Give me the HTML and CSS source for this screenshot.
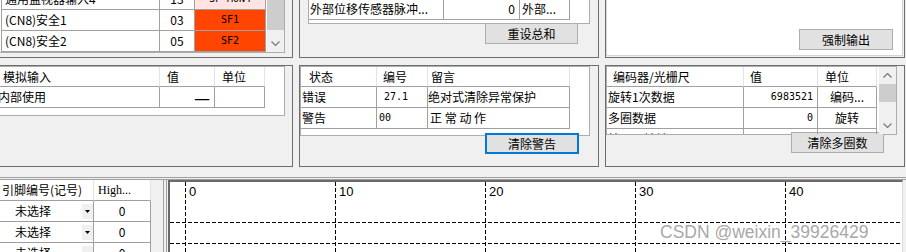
FILE: index.html
```html
<!DOCTYPE html>
<html>
	<head>
		<meta charset="UTF-8">
		<title>监视器</title>
		<link rel="stylesheet" href="styles.css">
	</head>
	<body>
		<div class="screen">
			<!--上排三个面板-->
			<div class="row row-top">
				<div class="panel panel-cut">
					<div class="list list-io">
						<div class="grid grid-io">
							<div class="cell">通用监视器输入4</div>
							<div class="cell c">13</div>
							<div class="cell c mono pink">SF-MON4</div>
							<div class="cell">(CN8)安全1</div>
							<div class="cell c">03</div>
							<div class="cell c mono orange">SF1</div>
							<div class="cell">(CN8)安全2</div>
							<div class="cell c">05</div>
							<div class="cell c mono orange">SF2</div>
						</div>
						<div class="vscroll">
							<div class="thumb thumb-io"></div>
							<div class="track"></div>
							<div class="sbtn">
								<svg width="9" height="5" viewBox="0 0 9 5"><polyline points="0.5,0.5 4.5,4.5 8.5,0.5" fill="none" stroke="#7a7a7a" stroke-width="1.2"/></svg>
							</div>
						</div>
					</div>
				</div>

				<div class="panel">
					<div class="list list-ext">
						<div class="grid grid-ext">
							<div class="cell">外部位移传感器脉冲...</div>
							<div class="cell r">0</div>
							<div class="cell">外部...</div>
						</div>
					</div>
					<button class="btn btn-sum">重设总和</button>
				</div>

				<div class="panel">
					<div class="out-area">
						<button class="btn btn-out">强制输出</button>
					</div>
				</div>
			</div>

			<!--中排三个面板-->
			<div class="row row-mid">
				<div class="panel panel-cut">
					<div class="list list-ai">
						<div class="grid grid-ai">
							<div class="cell head">模拟输入</div>
							<div class="cell head">值</div>
							<div class="cell head">单位</div>
							<div class="cell body-ai">内部使用</div>
							<div class="cell r"><span class="dash">—</span></div>
							<div class="cell"></div>
						</div>
					</div>
				</div>

				<div class="panel">
					<div class="list list-alarm">
						<div class="grid grid-alarm">
							<div class="cell head h-state">状态</div>
							<div class="cell head h-no">编号</div>
							<div class="cell head h-msg">留言</div>
							<div class="cell">错误</div>
							<div class="cell mono no-err">27.1</div>
							<div class="cell msg-err">绝对式清除异常保护</div>
							<div class="cell">警告</div>
							<div class="cell mono no-warn">00</div>
							<div class="cell msg-warn">正 常 动 作</div>
						</div>
					</div>
					<button class="btn btn-focus btn-warn">清除警告</button>
				</div>

				<div class="panel">
					<div class="list list-enc">
						<div class="grid grid-enc">
							<div class="cell head">编码器/光栅尺</div>
							<div class="cell head">值</div>
							<div class="cell head">单位</div>
							<div class="cell">旋转1次数据</div>
							<div class="cell r mono">6983521</div>
							<div class="cell c">编码...</div>
							<div class="cell">多圈数据</div>
							<div class="cell r mono">0</div>
							<div class="cell c">旋转</div>
							<div class="cell">编码器地址</div>
							<div class="cell"></div>
							<div class="cell"></div>
						</div>
						<div class="vscroll">
							<div class="sbtn">
								<svg width="9" height="5" viewBox="0 0 9 5"><polyline points="0.5,4.5 4.5,0.5 8.5,4.5" fill="none" stroke="#7a7a7a" stroke-width="1.2"/></svg>
							</div>
							<div class="thumb thumb-enc"></div>
							<div class="track"></div>
							<div class="sbtn">
								<svg width="9" height="5" viewBox="0 0 9 5"><polyline points="0.5,0.5 4.5,4.5 8.5,0.5" fill="none" stroke="#7a7a7a" stroke-width="1.2"/></svg>
							</div>
						</div>
					</div>
					<button class="btn btn-multi">清除多圈数</button>
				</div>
			</div>

			<!--下方: 引脚表 + 波形-->
			<div class="bottom">
				<div class="bottom-inner">
					<div class="grid pins">
						<div class="cell head h-pin">引脚编号(记号)</div>
						<div class="cell head h-high">High...</div>
						<div class="cell pick"><span class="pick-text">未选择</span><span class="dd"><svg width="5" height="3" viewBox="0 0 5 3"><polygon points="0,0 5,0 2.5,3" fill="#000"/></svg></span></div>
						<div class="cell c">0</div>
						<div class="cell pick"><span class="pick-text">未选择</span><span class="dd"><svg width="5" height="3" viewBox="0 0 5 3"><polygon points="0,0 5,0 2.5,3" fill="#000"/></svg></span></div>
						<div class="cell c">0</div>
						<div class="cell pick"><span class="pick-text">未选择</span><span class="dd"><svg width="5" height="3" viewBox="0 0 5 3"><polygon points="0,0 5,0 2.5,3" fill="#000"/></svg></span></div>
						<div class="cell c">0</div>
					</div>
					<div class="graph-frame">
						<div class="graph-inner">
							<div class="graph">
								<svg class="plot" width="732" height="70" viewBox="0 0 732 70">
									<g stroke="#000" stroke-width="1" stroke-dasharray="4 2" fill="none">
										<line x1="15.5" y1="0" x2="15.5" y2="70"/>
										<line x1="165.5" y1="0" x2="165.5" y2="70"/>
										<line x1="315.5" y1="0" x2="315.5" y2="70"/>
										<line x1="465.5" y1="0" x2="465.5" y2="70"/>
										<line x1="615.5" y1="0" x2="615.5" y2="70"/>
										<line x1="0" y1="40.5" x2="732" y2="40.5"/>
										<line x1="0" y1="61.5" x2="732" y2="61.5"/>
									</g>
									<g class="plot-label">
										<text x="19" y="14">0</text>
										<text x="169" y="14">10</text>
										<text x="319" y="14">20</text>
										<text x="469" y="14">30</text>
										<text x="619" y="14">40</text>
									</g>
								</svg>
							</div>
						</div>
					</div>
				</div>
			</div>

			<div class="watermark">CSDN @weixin_39926429</div>
		</div>
	</body>
</html>
```

FILE: styles.css
```css
*{
	margin: 0px;
	padding: 0px;
	box-sizing: border-box;
}

body{
	background-color: #f0f0f0;
	font-family: "Noto Sans CJK SC", sans-serif;
	font-size: 12px;
	color: #000;
}

.screen{
	position: relative;
	width: 906px;
	height: 252px;
	overflow: hidden;
}

/*三列面板*/
.row{
	display: grid;
	grid-template-columns: 293px 300px 300px;
	column-gap: 6px;
}

.row-top{
	height: 58px;
}

.row-mid{
	height: 102px;
	margin-top: 7px;
}

.panel{
	border: 1px solid #6e6e6e;
}

.row-top .panel{
	border-top: none;
}

/*左边被截掉的面板*/
.panel-cut{
	border-left: none;
}

/*列表*/
.list{
	background-color: #fff;
	border: 1px solid #adadad;
	overflow: hidden;
}

.grid{
	display: grid;
	grid-auto-rows: 21px;
}

.cell{
	border-right: 1px solid #a0a0a0;
	border-bottom: 1px solid #a0a0a0;
	line-height: 20px;
	white-space: nowrap;
	overflow: hidden;
	padding-left: 1px;
}

.head{
	border-right-color: #e3e3e3;
	line-height: 19px;
	padding-left: 7px;
}

.c{
	text-align: center;
	padding-left: 0px;
}

.r{
	text-align: right;
	padding-right: 4px;
}

.mono{
	font-family: "DejaVu Sans Mono", monospace;
	font-size: 10px;
}

.pink{
	background-color: #ffe4e1;
}

.orange{
	background-color: #ff4500;
}

/*滚动条*/
.vscroll{
	width: 17px;
	display: flex;
	flex-direction: column;
	background-color: #f0f0f0;
}

.thumb{
	background-color: #cdcdcd;
}

.track{
	flex: 1;
}

.sbtn{
	height: 17px;
	display: flex;
	align-items: center;
	justify-content: center;
}

/*按钮*/
.btn{
	display: block;
	width: 93px;
	height: 21px;
	background-color: #e1e1e1;
	border: 1px solid #adadad;
	font-family: "Noto Sans CJK SC", sans-serif;
	font-size: 12px;
	line-height: 19px;
	text-align: center;
	color: #000;
}

.btn-focus{
	border: 2px solid #0078d7;
	line-height: 17px;
}

/*上排*/
.list-io{
	display: flex;
	width: 285px;
	height: 65px;
	margin-top: -12px;
	border-left: none;
	padding-left: 1px;
}

.grid-io{
	grid-template-columns: 158px 35px 71px;
	border-left: 1px solid #a0a0a0;
	margin-right: 1px;
	align-self: flex-start;
}

.grid-io .cell{
	padding-left: 3px;
}

.grid-io .c{
	padding-left: 0px;
}

.thumb-io{
	height: 41px;
}

.list-ext{
	width: 282px;
	height: 25px;
	margin: -1px 0 0 8px;
	border-top: none;
}

.grid-ext{
	grid-template-columns: 135px 76px 50px;
}

.grid-ext .cell:last-child{
	padding-left: 2px;
}

.btn-sum{
	margin: -1px 0 0 185px;
}

.out-area{
	height: 56px;
	margin-right: 1px;
	background-color: #fff;
	border: 1px solid #d4d4d4;
	border-top: none;
	padding: 29px 0 0 192px;
}

.btn-out{
	width: 94px;
}

/*中排*/
.list-ai{
	width: 285px;
	height: 50px;
	border-left: none;
}

.grid-ai{
	margin-left: -4px;
	grid-template-columns: 164px 55px 50px;
	grid-template-rows: 20px;
}

.body-ai{
	padding-left: 2px;
}

.dash{
	font-size: 18px;
	line-height: 20px;
}

.list-alarm{
	width: 290px;
	height: 70px;
}

.grid-alarm{
	grid-template-columns: 76px 51px 142px;
	grid-template-rows: 20px;
}

.h-state{
	padding-left: 8px;
}

.h-no{
	padding-left: 6px;
}

.h-msg{
	padding-left: 3px;
}

.no-err{
	padding-left: 7px;
}

.no-warn{
	padding-left: 2px;
}

.msg-err{
	padding-left: 0px;
}

.msg-warn{
	padding-left: 2px;
}

.btn-warn{
	width: 94px;
	margin: -3px 0 0 185px;
}

.list-enc{
	display: flex;
	width: 291px;
	height: 69px;
}

.grid-enc{
	grid-template-columns: 137px 74px 59px;
	grid-template-rows: 20px;
	margin-right: 2px;
	align-self: flex-start;
}

.grid-enc .head{
	padding-left: 6px;
}

.grid-enc .head:nth-child(3){
	padding-left: 7px;
}

.grid-enc .c{
	padding-left: 0px;
}

.thumb-enc{
	height: 18px;
}

.btn-multi{
	margin: -3px 0 0 185px;
}

/*下方*/
.bottom{
	margin-top: 10px;
	border-top: 1px solid #a0a0a0;
	padding-top: 1px;
}

.bottom-inner{
	display: flex;
	height: 73px;
	border-top: 1px solid #a0a0a0;
}

.pins{
	width: 151px;
	grid-template-columns: 94px 57px;
	align-self: flex-start;
	background-color: #fff;
}

.h-pin{
	padding-left: 2px;
	line-height: 20px;
}

.h-high{
	padding-left: 4px;
	line-height: 20px;
	font-family: "Liberation Serif", serif;
	font-size: 12px;
}

.pick{
	display: flex;
	align-items: center;
	padding-left: 0px;
}

.pick-text{
	flex: 1;
	padding-left: 15px;
}

.dd{
	width: 11px;
	height: 15px;
	background-color: #f0f0f0;
	display: flex;
	align-items: center;
	justify-content: center;
}

.graph-frame{
	flex: 1;
	margin-left: 12px;
	border-left: 1px solid #a0a0a0;
	padding-left: 2px;
}

.graph-inner{
	height: 100%;
	border-left: 1px solid #a0a0a0;
	padding-left: 1px;
}

.graph{
	height: 100%;
	margin-right: 3px;
	background-color: #fff;
	border-left: 2px solid #696969;
	border-top: 2px solid #696969;
	border-right: 1px solid #dcdcdc;
	overflow: hidden;
}

.plot{
	display: block;
}

.plot-label{
	font-family: "Liberation Sans", Arial, sans-serif;
	font-size: 13px;
	fill: #000;
}

/*水印*/
.watermark{
	position: absolute;
	left: 660px;
	top: 222px;
	font-family: "Liberation Sans", Arial, sans-serif;
	font-size: 17.5px;
	line-height: 20px;
	color: #a8a8a8;
	white-space: nowrap;
}
```
